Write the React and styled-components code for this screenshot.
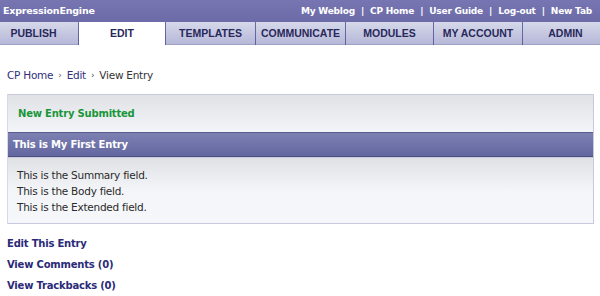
import styled, { createGlobalStyle } from "styled-components";

const Global = createGlobalStyle`
  html, body { margin: 0; padding: 0; background: #fff; }
  body { font-family: "DejaVu Sans", "Liberation Sans", sans-serif; }
`;

const Header = styled.div`
  background: linear-gradient(#7776b2, #5f5f9e);
`;

const TopBar = styled.div`
  height: 21px;
  display: flex;
  align-items: center;
  justify-content: space-between;
  padding: 0 8px 0 3px;
  color: #fff;
  font-weight: bold;
`;

const Brand = styled.span`
  font-size: 9.5px;
  letter-spacing: -0.2px;
`;

const TopLinks = styled.div`
  display: flex;
  gap: 6px;
  font-size: 9px;
  letter-spacing: -0.2px;
`;

const Tabs = styled.div`
  display: flex;
  height: 23px;
  padding-top: 1px;
`;

const Tab = styled.div`
  width: ${(p) => p.w}px;
  flex: none;
  display: flex;
  align-items: center;
  justify-content: center;
  font-family: "Liberation Sans", Arial, sans-serif;
  font-size: 10.5px;
  font-weight: bold;
  color: #28285a;
  margin-right: 1px;
  background: ${(p) =>
    p.active ? "#fff" : "linear-gradient(#d6d8ea, #b5b8d8)"};
  border-bottom: 1px solid ${(p) => (p.active ? "#fff" : "#9fa1c4")};
  box-sizing: border-box;
  &:first-child { padding-right: 11px; }
  &:last-child { margin-right: 0; flex: 1; padding-left: 8px; }
`;

const Main = styled.div`
  padding: 0 6px 0 7px;
`;

const Crumbs = styled.div`
  margin-top: 23px;
  font-size: 10.5px;
  letter-spacing: -0.25px;
  color: #333;
  display: flex;
  gap: 5px;
  align-items: center;
  height: 14px;
`;

const Crumb = styled.span`
  color: #2f2f7d;
`;

const Sep = styled.span`
  font-size: 9px;
  color: #555;
`;

const Box = styled.div`
  margin-top: 12px;
  border: 1px solid #c8c9dd;
  border-left-color: #d8d9e6;
`;

const Notice = styled.div`
  height: 37px;
  display: flex;
  align-items: center;
  padding-left: 10px;
  background: linear-gradient(#e1e2e6, #f3f4f7);
  color: #18963a;
  font-size: 10px;
  letter-spacing: -0.2px;
  font-weight: bold;
`;

const TitleBar = styled.div`
  height: 23px;
  display: flex;
  align-items: center;
  padding-left: 5px;
  background: linear-gradient(#7d80b2, #6367a0);
  border-top: 1px solid #5a5d8e;
  border-bottom: 1px solid #4e5082;
  color: #fff;
  font-size: 10px;
  letter-spacing: -0.2px;
  font-weight: bold;
`;

const Body = styled.div`
  border-top: 1px solid #c9cadb;
  padding: 9px 9px 8px;
  background: linear-gradient(#e0e1e4, #f4f5f8 50%, #f6f7fa);
  color: #2a2a2a;
  font-size: 10.5px;
  letter-spacing: -0.25px;
  line-height: 16px;
`;

const Links = styled.div`
  margin-top: 13px;
  display: flex;
  flex-direction: column;
  gap: 7px;
`;

const ActionLink = styled.a`
  color: #2a2a78;
  font-size: 10px;
  letter-spacing: -0.2px;
  font-weight: bold;
  line-height: 14px;
  text-decoration: none;
`;

const tabs = [
  ["PUBLISH", 78],
  ["EDIT", 86],
  ["TEMPLATES", 89],
  ["COMMUNICATE", 89],
  ["MODULES", 87],
  ["MY ACCOUNT", 88],
  ["ADMIN", 77],
];

export default function App() {
  return (
    <>
      <Global />
      <Header>
        <TopBar>
          <Brand>ExpressionEngine</Brand>
          <TopLinks>
            <span>My Weblog</span><span>|</span>
            <span>CP Home</span><span>|</span>
            <span>User Guide</span><span>|</span>
            <span>Log-out</span><span>|</span>
            <span>New Tab</span>
          </TopLinks>
        </TopBar>
        <Tabs>
          {tabs.map(([t, w]) => (
            <Tab key={t} w={w} active={t === "EDIT"}>{t}</Tab>
          ))}
        </Tabs>
      </Header>
      <Main>
        <Crumbs>
          <Crumb>CP Home</Crumb><Sep>›</Sep>
          <Crumb>Edit</Crumb><Sep>›</Sep>
          <span>View Entry</span>
        </Crumbs>
        <Box>
          <Notice>New Entry Submitted</Notice>
          <TitleBar>This is My First Entry</TitleBar>
          <Body>
            <div>This is the Summary field.</div>
            <div>This is the Body field.</div>
            <div>This is the Extended field.</div>
          </Body>
        </Box>
        <Links>
          <ActionLink>Edit This Entry</ActionLink>
          <ActionLink>View Comments (0)</ActionLink>
          <ActionLink>View Trackbacks (0)</ActionLink>
        </Links>
      </Main>
    </>
  );
}
